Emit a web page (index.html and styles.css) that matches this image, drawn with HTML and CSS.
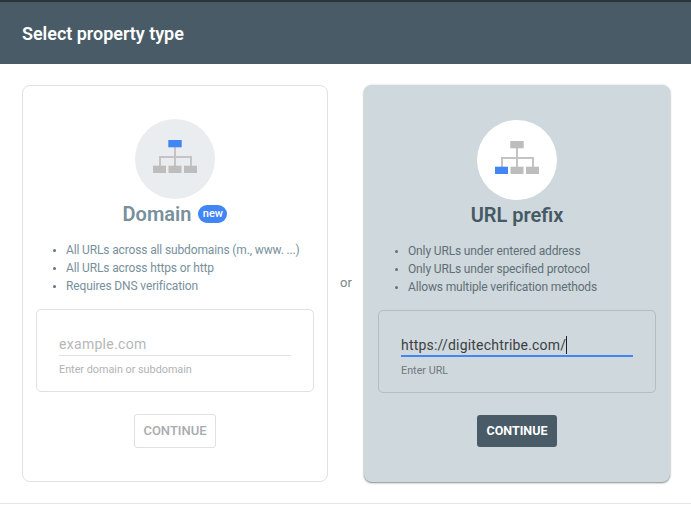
FILE: index.html
```html
<!DOCTYPE html>
<html lang="en">
<head>
<meta charset="utf-8">
<title>Select property type</title>
<link rel="stylesheet" href="styles.css">
</head>
<body>
<header class="header"><h1 class="header-title">Select property type</h1></header>
<main class="main">
  <section class="card">
    <div class="circle">
      <svg class="tree" width="46" height="36" viewBox="0 0 46 36">
        <path class="line" d="M23 8V27M8 27V18H39V27"/>
        <rect class="blue" x="16.300" y="1" width="13.400" height="7.300"/>
        <rect class="grey" x="1" y="26.700" width="13" height="7.300"/>
        <rect class="grey" x="16.500" y="26.700" width="13" height="7.300"/>
        <rect class="grey" x="32" y="26.700" width="13" height="7.300"/>
      </svg>
    </div>
    <h2 class="card-title">Domain<span class="badge">new</span></h2>
    <ul class="points">
      <li>All URLs across all subdomains (m., www. ...)</li>
      <li>All URLs across https or http</li>
      <li>Requires DNS verification</li>
    </ul>
    <div class="field-box">
      <div class="field"><span class="placeholder">example.com</span></div>
      <div class="hint">Enter domain or subdomain</div>
    </div>
    <button class="btn" type="button">CONTINUE</button>
  </section>
  <div class="or">or</div>
  <section class="card card-active">
    <div class="circle">
      <svg class="tree" width="46" height="36" viewBox="0 0 46 36">
        <path class="line" d="M23 8V27M8 27V18H39V27"/>
        <rect class="grey" x="16.300" y="1" width="13.400" height="7.300"/>
        <rect class="blue" x="1" y="26.700" width="13" height="7.300"/>
        <rect class="grey" x="16.500" y="26.700" width="13" height="7.300"/>
        <rect class="grey" x="32" y="26.700" width="13" height="7.300"/>
      </svg>
    </div>
    <h2 class="card-title">URL prefix</h2>
    <ul class="points">
      <li>Only URLs under entered address</li>
      <li>Only URLs under specified protocol</li>
      <li>Allows multiple verification methods</li>
    </ul>
    <div class="field-box">
      <div class="field"><span class="value">https://digitechtribe.com/</span><span class="caret"></span></div>
      <div class="hint">Enter URL</div>
    </div>
    <button class="btn" type="button">CONTINUE</button>
  </section>
</main>
<div class="footer-rule"></div>
</body>
</html>
```
FILE: styles.css
```css
* { box-sizing: border-box; }
html, body { margin: 0; padding: 0; }
body {
  width: 691px;
  height: 514px;
  overflow: hidden;
  background: #fff;
  font-family: Roboto, "Liberation Sans", sans-serif;
}
.header {
  height: 64px;
  background: #485b66;
  border-top: 2px solid #2b3539;
  padding: 0 22px;
  display: flex;
  align-items: center;
}
.header-title {
  margin: 2px 0 0;
  color: #fff;
  font-size: 18px;
  line-height: 24px;
  font-weight: 600;
  letter-spacing: -0.03px;
}
.main {
  display: flex;
  padding: 21px 21px 0 22px;
}
.card {
  width: 306px;
  height: 397px;
  border: 1px solid #dfe1e3;
  border-radius: 8px;
  background: #fff;
  padding-top: 33px;
  display: flex;
  flex-direction: column;
  align-items: center;
  color: #78909c;
}
.card-active {
  background: #cfd8dc;
  border: 0;
  padding-top: 35px;
  box-shadow: 0 1px 2px rgba(60, 64, 67, 0.6), 0 0 3px rgba(60, 64, 67, 0.1);
  color: #455a64;
}
.or {
  width: 36px;
  padding-top: 191px;
  text-align: center;
  font-size: 13px;
  line-height: 14px;
  color: #80868b;
}
.circle {
  width: 80px;
  height: 80px;
  border-radius: 50%;
  background: #eaedf0;
  display: flex;
  align-items: center;
  justify-content: center;
}
.card-active .circle { background: #fff; }
.tree { display: block; margin-bottom: 4px; }
.line { fill: none; stroke: #c4c4c4; stroke-width: 2; }
.blue { fill: #4285f4; }
.grey { fill: #bdbdbd; }
.card-title {
  margin: 3px 0 0;
  height: 24px;
  font-size: 20px;
  line-height: 24px;
  font-weight: 600;
  display: flex;
  align-items: center;
}
.badge {
  margin-left: 7px;
  width: 29px;
  height: 18px;
  border-radius: 9px;
  background: #4285f4;
  color: #fff;
  font-size: 11px;
  line-height: 17px;
  font-weight: 500;
  text-align: center;
}
.points {
  align-self: stretch;
  margin: 15px 0 0;
  padding: 0 0 0 43px;
  font-size: 12px;
  line-height: 18px;
  letter-spacing: -0.14px;
  color: #78909c;
  height: 54px;
}
.card-active .points { color: #5f6f77; padding-left: 44px; }
.points li::marker { font-size: 10px; color: #5f7380; }
.field-box {
  margin-top: 14px;
  width: 278px;
  height: 83px;
  border: 1px solid #dfe1e3;
  border-radius: 5px;
  padding: 23px 22px 0;
}
.card-active .field-box { border-color: #b4bdc1; }
.field {
  height: 23px;
  border-bottom: 1px solid #dfe1e3;
  font-size: 14px;
  line-height: 22px;
  letter-spacing: 0.2px;
  display: flex;
  align-items: center;
}
.card-active .field { border-bottom: 2px solid #4285f4; }
.placeholder { color: #b5b7b9; letter-spacing: 0.3px; }
.value { color: #3c4043; }
.caret { width: 1px; height: 18px; margin-left: 0; background: #202124; }
.hint {
  margin-top: 7px;
  font-size: 10.800px;
  line-height: 14px;
  color: #b0b3b5;
}
.card-active .hint { color: #72797d; }
.btn {
  margin-top: 22px;
  width: 82px;
  height: 34px;
  border: 1px solid #dfe1e3;
  border-radius: 3px;
  background: #fff;
  color: #a9abad;
  font-family: inherit;
  font-size: 13px;
  font-weight: 500;
  padding: 0 0 1px;
}
.card-active .btn {
  width: 80px;
  height: 32px;
  border: 0;
  background: #485b66;
  color: #fff;
  font-size: 12.500px;
  font-weight: 700;
}
.footer-rule {
  margin-top: 21px;
  height: 1px;
  background: #e3e5e7;
}
```
